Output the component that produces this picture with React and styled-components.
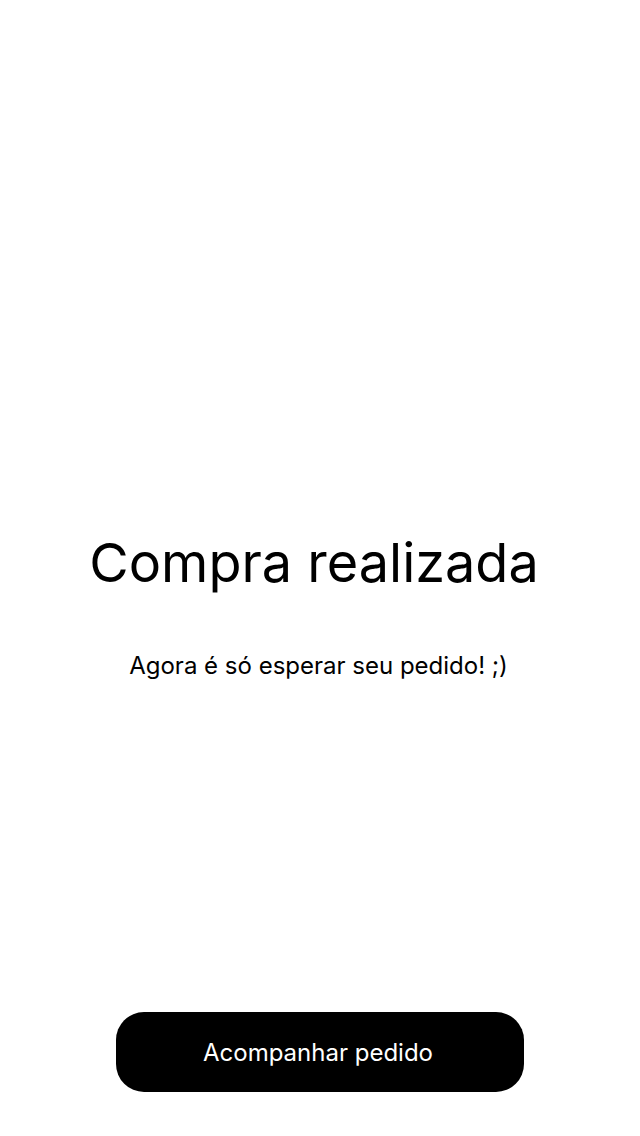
import React from "react";
import styled, { createGlobalStyle } from "styled-components";

const Global = createGlobalStyle`
  html, body { margin: 0; padding: 0; background: #fff; }
  body { font-family: Inter, "Noto Sans", sans-serif; color: #000; }
`;

const Screen = styled.main`
  min-height: 100vh;
  box-sizing: border-box;
  display: flex;
  flex-direction: column;
  align-items: center;
  padding: 0 116px 44px;
`;

const Content = styled.section`
  flex: 1;
  display: flex;
  flex-direction: column;
  align-items: center;
  padding-top: 531px;
`;

const Title = styled.h1`
  margin: 0 12px 0 0;
  font-size: 54px;
  font-weight: 400;
  line-height: 64px;
  white-space: nowrap;
`;

const Subtitle = styled.p`
  margin: 55px 3px 0 0;
  font-size: 24px;
  font-weight: 400;
  line-height: 32px;
  white-space: nowrap;
`;

const Button = styled.button`
  width: 408px;
  height: 80px;
  padding: 0 4px 0 0;
  border: none;
  border-radius: 28px;
  background: #000;
  color: #fff;
  font-family: Inter, "Noto Sans", sans-serif;
  font-size: 24px;
  font-weight: 400;
  cursor: pointer;
`;

export default function App() {
  return (
    <>
      <Global />
      <Screen>
        <Content>
          <Title>Compra realizada</Title>
          <Subtitle>Agora é só esperar seu pedido! ;)</Subtitle>
        </Content>
        <Button>Acompanhar pedido</Button>
      </Screen>
    </>
  );
}
